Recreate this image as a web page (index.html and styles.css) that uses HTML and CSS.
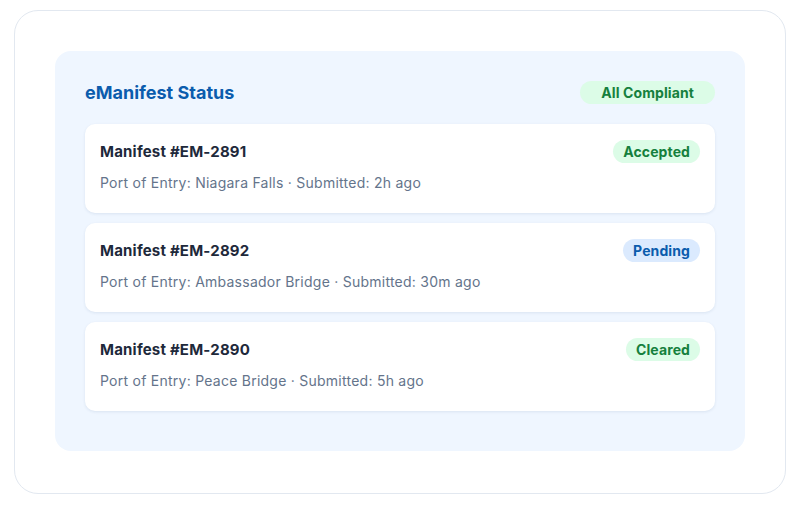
FILE: index.html
```html
<!DOCTYPE html>
<html lang="en">
<head>
    <meta charset="UTF-8">
    <meta name="viewport" content="width=device-width, initial-scale=1.0">
    <title>eManifest Status</title>
    <link rel="stylesheet" href="styles.css">
</head>
<body>
    <div class="outer-card">
        <div class="status-panel">
            <div class="panel-header">
                <h2 class="panel-title">eManifest Status</h2>
                <span class="badge badge-green badge-wide">All Compliant</span>
            </div>
            <div class="manifest-list">
                <div class="manifest-item">
                    <div class="manifest-top">
                        <span class="manifest-id">Manifest #EM-2891</span>
                        <span class="badge badge-green">Accepted</span>
                    </div>
                    <div class="manifest-meta">Port of Entry: Niagara Falls · Submitted: 2h ago</div>
                </div>
                <div class="manifest-item">
                    <div class="manifest-top">
                        <span class="manifest-id">Manifest #EM-2892</span>
                        <span class="badge badge-blue">Pending</span>
                    </div>
                    <div class="manifest-meta">Port of Entry: Ambassador Bridge · Submitted: 30m ago</div>
                </div>
                <div class="manifest-item">
                    <div class="manifest-top">
                        <span class="manifest-id">Manifest #EM-2890</span>
                        <span class="badge badge-green">Cleared</span>
                    </div>
                    <div class="manifest-meta">Port of Entry: Peace Bridge · Submitted: 5h ago</div>
                </div>
            </div>
        </div>
    </div>
</body>
</html>
```

FILE: styles.css
```css
* {
    box-sizing: border-box;
    margin: 0;
    padding: 0;
}

body {
    font-family: Inter, "Noto Sans", Arial, sans-serif;
    background-color: #ffffff;
    padding: 10px 17px 14px 14px;
}

.outer-card {
    background-color: white;
    border: 1px solid #e2e8f0;
    border-radius: 24px;
    padding: 40px;
    height: 484px;
}

.status-panel {
    background-color: #eff6ff;
    border-radius: 16px;
    padding: 30px 30px 30px;
}

.panel-header {
    display: flex;
    justify-content: space-between;
    align-items: center;
    height: 23px;
    margin-bottom: 20px;
}

.panel-title {
    font-size: 18px;
    font-weight: 700;
    color: #0b5cad;
}

.badge {
    display: inline-flex;
    align-items: center;
    height: 23px;
    padding: 0 10px;
    border-radius: 12px;
    font-size: 14px;
    font-weight: 700;
    letter-spacing: 0.1px;
}

.badge-wide {
    padding: 0 21px;
}

.badge-green {
    background-color: #dcfce7;
    color: #15803d;
}

.badge-blue {
    background-color: #dbeafe;
    color: #0b5cad;
}

.manifest-item {
    background-color: white;
    border-radius: 10px;
    padding: 16px 15px 20px;
    margin-bottom: 10px;
    box-shadow: 0 1px 3px rgba(30, 64, 120, 0.1);
}

.manifest-top {
    display: flex;
    justify-content: space-between;
    align-items: center;
    height: 23px;
    margin-bottom: 10px;
}

.manifest-id {
    font-size: 15px;
    font-weight: 700;
    letter-spacing: 0.2px;
    color: #1e293b;
}

.manifest-meta {
    font-size: 14px;
    line-height: 20px;
    letter-spacing: 0.25px;
    color: #64748b;
}
```
